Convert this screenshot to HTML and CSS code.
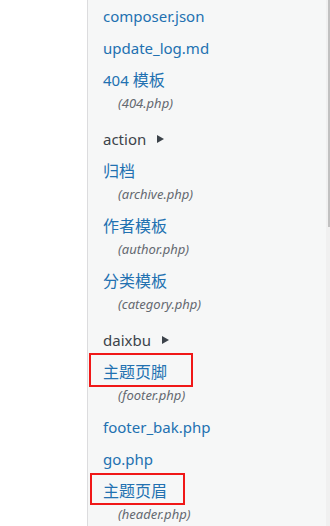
FILE: index.html
```html
<!DOCTYPE html>
<html lang="zh-CN">
<head>
    <meta charset="UTF-8">
    <meta name="viewport" content="width=device-width, initial-scale=1.0">
    <title>主题文件</title>
    <link rel="stylesheet" href="styles.css">
</head>
<body>

    <div class="gutter"></div>

    <div class="panel">
        <ul class="file-list">
            <li class="file"><a href="#">composer.json</a></li>
            <li class="file"><a href="#">update_log.md</a></li>
            <li class="file">
                <a href="#">404 <span class="zh">模板</span></a>
                <span class="file-desc">(404.php)</span>
            </li>
            <li class="folder">action <span class="arrow"></span></li>
            <li class="file">
                <a href="#" class="zh">归档</a>
                <span class="file-desc">(archive.php)</span>
            </li>
            <li class="file">
                <a href="#" class="zh">作者模板</a>
                <span class="file-desc">(author.php)</span>
            </li>
            <li class="file">
                <a href="#" class="zh">分类模板</a>
                <span class="file-desc">(category.php)</span>
            </li>
            <li class="folder">daixbu <span class="arrow"></span></li>
            <li class="file">
                <a href="#" class="zh marked marked-wide">主题页脚</a>
                <span class="file-desc">(footer.php)</span>
            </li>
            <li class="file"><a href="#">footer_bak.php</a></li>
            <li class="file"><a href="#">go.php</a></li>
            <li class="file">
                <a href="#" class="zh marked">主题页眉</a>
                <span class="file-desc">(header.php)</span>
            </li>
        </ul>

        <!-- scrollbar -->
        <div class="scroll-track">
            <div class="scroll-thumb"></div>
        </div>
    </div>

</body>
</html>
```

FILE: styles.css
```css
body {
    font-family: 'Noto Sans', 'Noto Sans CJK SC', sans-serif;
    display: flex;
    height: 100vh;
    margin: 0;
    background-color: #fff;
    overflow: hidden;
}

.gutter {
    width: 87px;
    flex-shrink: 0;
    border-right: 1px solid #dcdcde;
}

.panel {
    flex: 1;
    display: flex;
    background-color: #f6f7f7;
}

.file-list {
    flex: 1;
    list-style-type: none;
    margin: 0;
    padding: 0 0 0 15px;
}

.file {
    padding: 4px 0;
}

.file a {
    display: inline-block;
    color: #2271b1;
    font-size: 15px;
    line-height: 24px;
    text-decoration: none;
}

.file .zh {
    font-size: 16px;
}

.file-desc {
    display: block;
    margin: 1px 0 2px 15px;
    color: #646970;
    font-size: 13px;
    font-style: italic;
    line-height: 20px;
}

.folder {
    display: flex;
    align-items: center;
    padding: 8px 0 4px;
    color: #3c434a;
    font-size: 15px;
    line-height: 24px;
}

.arrow {
    width: 0;
    height: 0;
    margin-left: 11px;
    border-top: 4px solid transparent;
    border-bottom: 4px solid transparent;
    border-left: 7px solid #3c434a;
}

/* red annotation boxes */
.marked {
    position: relative;
}

.marked::after {
    content: "";
    position: absolute;
    top: -6px;
    bottom: -2px;
    left: -13px;
    right: -18px;
    border: 2px solid #f01818;
}

.marked-wide::after {
    top: -7px;
    bottom: -3px;
    left: -14px;
    right: -26px;
}

.scroll-track {
    width: 4px;
    flex-shrink: 0;
    background-color: #f0f0f0;
    display: flex;
    justify-content: flex-end;
}

.scroll-thumb {
    width: 2px;
    height: 227px;
    background-color: #c1c1c1;
}
```
